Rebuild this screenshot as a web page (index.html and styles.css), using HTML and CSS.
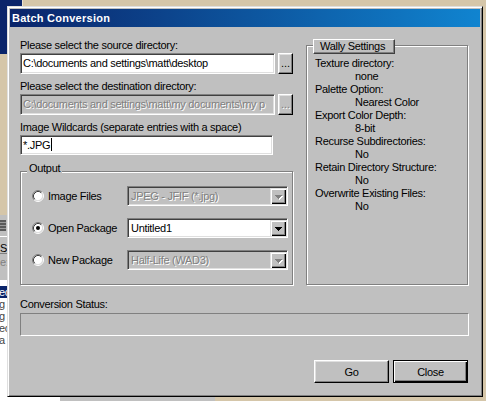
FILE: index.html
```html
<!DOCTYPE html>
<html>
<head>
<meta charset="utf-8">
<title>Batch Conversion</title>
<link rel="stylesheet" href="styles.css">
</head>
<body>
<div class="desktop">
  <div class="bg-title"></div>
  <div class="bg-explorer">
    <div class="bx-toolbar"><span class="bx-icon"></span></div>
    <div class="bx-sep"></div>
    <div class="bx-row">S</div>
    <div class="bx-row dim">e:</div>
    <div class="bx-fill"></div>
    <ul class="bx-list">
      <li class="sel">ec</li>
      <li>g</li>
      <li>g</li>
      <li>ec</li>
      <li>a</li>
    </ul>
  </div>
  <div class="bg-taskstrip"></div>

  <div class="window">
    <div class="titlebar">Batch Conversion</div>
    <div class="client">
      <div class="top">
        <div class="left">
          <div class="lbl">Please select the source directory:</div>
          <div class="pathrow">
            <div class="field">C:\documents and settings\matt\desktop</div>
            <div class="browse">...</div>
          </div>

          <div class="lbl gap">Please select the destination directory:</div>
          <div class="pathrow">
            <div class="field disabled">C:\documents and settings\matt\my documents\my p</div>
            <div class="browse disabled">...</div>
          </div>

          <div class="lbl gap">Image Wildcards (separate entries with a space)</div>
          <div class="field wild">*.JPG<span class="caret"></span></div>

          <div class="group output">
            <div class="legend">Output</div>
            <div class="opts">
              <div class="opt">
                <svg class="radio" viewBox="0 0 12 12" width="12" height="12">
                  <circle cx="6" cy="6" r="4.5" fill="#fff"/>
                  <path d="M2.11 9.89A5.5 5.5 0 0 1 9.89 2.11" fill="none" stroke="#808080"/>
                  <path d="M9.89 2.11A5.5 5.5 0 0 1 2.11 9.89" fill="none" stroke="#fff"/>
                  <path d="M2.82 9.18A4.5 4.5 0 0 1 9.18 2.82" fill="none" stroke="#404040"/>
                  <path d="M9.18 2.82A4.5 4.5 0 0 1 2.82 9.18" fill="none" stroke="#dfdfdf"/>
                </svg>
                <span class="opt-label">Image Files</span>
                <div class="combo disabled">
                  <span class="combo-text">JPEG - JFIF (*.jpg)</span>
                  <span class="combo-btn">
                    <svg viewBox="0 0 16 16" width="16" height="16">
                      <g fill="#fff"><rect x="6" y="8" width="7" height="1"/><rect x="7" y="9" width="5" height="1"/><rect x="8" y="10" width="3" height="1"/><rect x="9" y="11" width="1" height="1"/></g>
                      <g fill="#808080"><rect x="5" y="7" width="7" height="1"/><rect x="6" y="8" width="5" height="1"/><rect x="7" y="9" width="3" height="1"/><rect x="8" y="10" width="1" height="1"/></g>
                    </svg>
                  </span>
                </div>
              </div>
              <div class="opt">
                <svg class="radio" viewBox="0 0 12 12" width="12" height="12">
                  <circle cx="6" cy="6" r="4.5" fill="#fff"/>
                  <path d="M2.11 9.89A5.5 5.5 0 0 1 9.89 2.11" fill="none" stroke="#808080"/>
                  <path d="M9.89 2.11A5.5 5.5 0 0 1 2.11 9.89" fill="none" stroke="#fff"/>
                  <path d="M2.82 9.18A4.5 4.5 0 0 1 9.18 2.82" fill="none" stroke="#404040"/>
                  <path d="M9.18 2.82A4.5 4.5 0 0 1 2.82 9.18" fill="none" stroke="#dfdfdf"/>
                  <circle cx="6" cy="6" r="2" fill="#000"/>
                </svg>
                <span class="opt-label">Open Package</span>
                <div class="combo">
                  <span class="combo-text">Untitled1</span>
                  <span class="combo-btn">
                    <svg viewBox="0 0 16 16" width="16" height="16">
                      <g fill="#000"><rect x="5" y="7" width="7" height="1"/><rect x="6" y="8" width="5" height="1"/><rect x="7" y="9" width="3" height="1"/><rect x="8" y="10" width="1" height="1"/></g>
                    </svg>
                  </span>
                </div>
              </div>
              <div class="opt">
                <svg class="radio" viewBox="0 0 12 12" width="12" height="12">
                  <circle cx="6" cy="6" r="4.5" fill="#fff"/>
                  <path d="M2.11 9.89A5.5 5.5 0 0 1 9.89 2.11" fill="none" stroke="#808080"/>
                  <path d="M9.89 2.11A5.5 5.5 0 0 1 2.11 9.89" fill="none" stroke="#fff"/>
                  <path d="M2.82 9.18A4.5 4.5 0 0 1 9.18 2.82" fill="none" stroke="#404040"/>
                  <path d="M9.18 2.82A4.5 4.5 0 0 1 2.82 9.18" fill="none" stroke="#dfdfdf"/>
                </svg>
                <span class="opt-label">New Package</span>
                <div class="combo disabled">
                  <span class="combo-text">Half-Life (WAD3)</span>
                  <span class="combo-btn">
                    <svg viewBox="0 0 16 16" width="16" height="16">
                      <g fill="#fff"><rect x="6" y="8" width="7" height="1"/><rect x="7" y="9" width="5" height="1"/><rect x="8" y="10" width="3" height="1"/><rect x="9" y="11" width="1" height="1"/></g>
                      <g fill="#808080"><rect x="5" y="7" width="7" height="1"/><rect x="6" y="8" width="5" height="1"/><rect x="7" y="9" width="3" height="1"/><rect x="8" y="10" width="1" height="1"/></g>
                    </svg>
                  </span>
                </div>
              </div>
            </div>
          </div>
        </div>

        <div class="group wally">
          <div class="wally-legend">Wally Settings</div>
          <div class="kv">
            <div class="k">Texture directory:</div>
            <div class="v">none</div>
            <div class="k">Palette Option:</div>
            <div class="v">Nearest Color</div>
            <div class="k">Export Color Depth:</div>
            <div class="v">8-bit</div>
            <div class="k">Recurse Subdirectories:</div>
            <div class="v">No</div>
            <div class="k">Retain Directory Structure:</div>
            <div class="v">No</div>
            <div class="k">Overwrite Existing Files:</div>
            <div class="v">No</div>
          </div>
        </div>
      </div>

      <div class="lbl status-lbl">Conversion Status:</div>
      <div class="status"></div>

      <div class="buttons">
        <div class="btn">Go</div>
        <div class="btn default">Close</div>
      </div>
    </div>
  </div>
</div>
</body>
</html>
```

FILE: styles.css
```css
* { box-sizing: border-box; }
html, body { margin: 0; padding: 0; }
body {
  width: 486px;
  height: 401px;
  overflow: hidden;
  background: #d5c6a9;
  font-family: "Liberation Sans", Arial, sans-serif;
  font-size: 11px;
  letter-spacing: -0.3px;
  color: #000;
}
.desktop { position: relative; width: 486px; height: 401px; }

/* background windows (partly hidden) */
.bg-title {
  position: absolute; left: 0; top: 0;
  width: 23px; height: 54px;
  background: #0a246a;
  border-right: 1px solid #ece2d0;
}
.bg-explorer {
  position: absolute; left: 0; top: 215px;
  width: 60px; height: 186px;
  background: #c0c0c0;
  display: flex; flex-direction: column;
  overflow: hidden;
}
.bx-toolbar { height: 21px; }
.bx-icon {
  display: block; margin: 5px 0 0 0;
  width: 6px; height: 11px;
  background: repeating-linear-gradient(to bottom, #5a5a5a 0 2px, #9a9a9a 2px 3px);
}
.bx-sep { height: 4px; border-top: 1px solid #fff; }
.bx-row { height: 14px; line-height: 14px; padding-top: 1px; border-bottom: 1px solid #808080; font-size: 11px; }
.bx-row.dim { color: #808080; border-bottom: 0; }
.bx-fill { height: 12px; }
.bx-list {
  list-style: none; margin: 0; padding: 6px 0 0 0;
  flex: 1; background: #fff;
}
.bx-list li { height: 12px; line-height: 12px; color: #444; text-indent: -1px; }
.bx-list li.sel { background: #0a246a; color: #fff; }
.bg-taskstrip {
  position: absolute; left: 60px; top: 390px;
  width: 155px; height: 11px;
  background: #c0c0c0;
}

/* dialog window */
.window {
  position: absolute; left: 7px; top: 6px;
  width: 476px; height: 391px;
  background: #c0c0c0;
  border: 1px solid;
  border-color: #dfdfdf #000 #000 #dfdfdf;
  box-shadow: inset 1px 1px #fff, inset -1px -1px #808080;
  padding: 2px;
  display: flex; flex-direction: column;
}
.titlebar {
  height: 18px;
  background: linear-gradient(to right, #0a246a, #1084d0);
  color: #fff;
  font-weight: bold;
  font-size: 11px;
  letter-spacing: 0.25px;
  line-height: 18px;
  padding-left: 2px;
  white-space: nowrap;
}
.client {
  flex: 1;
  padding: 12px 10px 0 10px;
  display: flex; flex-direction: column;
}
.top {
  display: grid;
  grid-template-columns: 273px 162px;
  column-gap: 13px;
  align-items: stretch;
}
.left { display: flex; flex-direction: column; }
.lbl { height: 13px; line-height: 13px; white-space: nowrap; }
.lbl.gap { margin-top: 6px; }

.pathrow { display: flex; gap: 3px; margin-top: 1px; height: 21px; }
.field {
  flex: 1;
  min-width: 0;
  height: 21px;
  background: #fff;
  border: 1px solid;
  border-color: #808080 #fff #fff #808080;
  box-shadow: inset 1px 1px #404040, inset -1px -1px #dfdfdf;
  padding: 0 2px;
  line-height: 19px;
  white-space: nowrap;
  overflow: hidden;
}
.field.disabled, .combo.disabled .combo-text { background: #c0c0c0; color: #808080; text-shadow: 1px 1px 0 #fff; }
.field.wild { flex: none; width: 253px; height: 20px; line-height: 18px; margin-top: 1px; }
.caret { display: inline-block; width: 1px; height: 13px; background: #000; vertical-align: -2px; margin-left: 1px; }

.browse, .btn {
  background: #c0c0c0;
  border: 1px solid;
  border-color: #fff #000 #000 #fff;
  box-shadow: inset -1px -1px #808080, inset 1px 1px #dfdfdf;
  display: flex; align-items: center; justify-content: center;
}
.browse { width: 15px; height: 21px; flex: none; line-height: 13px; padding-bottom: 1px; letter-spacing: 0; }
.browse.disabled { color: #808080; text-shadow: 1px 1px 0 #fff; }

/* group boxes */
.group {
  border: 1px solid #808080;
  box-shadow: inset 1px 1px #fff, 1px 1px #fff;
}
.output { margin-top: 16px; height: 114px; }
.legend {
  margin: -10px 0 0 6px;
  padding: 0 2px;
  width: fit-content;
  background: #c0c0c0;
  line-height: 13px;
  height: 13px;
}
.opts { display: flex; flex-direction: column; gap: 12px; margin-top: 11px; }
.opt { display: flex; align-items: center; height: 20px; padding-left: 11px; }
.radio { flex: none; display: block; }
.opt-label { width: 79px; margin-left: 4px; white-space: nowrap; }
.combo {
  width: 161px; height: 20px;
  display: flex;
  background: #fff;
  border: 1px solid;
  border-color: #808080 #fff #fff #808080;
  box-shadow: inset 1px 1px #404040, inset -1px -1px #dfdfdf;
  padding: 1px;
}
.combo.disabled { background: #c0c0c0; }
.combo-text { flex: 1; padding-left: 2px; line-height: 16px; white-space: nowrap; overflow: hidden; }
.combo-btn {
  width: 16px; height: 16px; flex: none;
  background: #c0c0c0;
  border-top: 1px solid #dfdfdf; border-left: 1px solid #dfdfdf;
  box-shadow: inset 1px 1px #fff, inset -1px -1px #000, inset -2px -2px #808080;
}
.combo-btn svg { display: block; margin: -1px 0 0 -1px; }

.wally { margin-top: 6px; }
.wally-legend {
  margin: -7px 0 0 6px;
  width: 82px; height: 15px;
  line-height: 13px;
  padding-left: 6px;
  background: #c0c0c0;
  border: 1px solid;
  border-color: #fff #404040 #404040 #fff;
  box-shadow: inset -1px -1px #808080;
  white-space: nowrap;
}
.kv { margin-top: 3px; padding-left: 8px; }
.k, .v { height: 13px; line-height: 13px; white-space: nowrap; }
.v { padding-left: 40px; }

.status-lbl { margin-top: 13px; }
.status {
  margin-top: 2px;
  width: 449px; height: 23px;
  border: 1px solid;
  border-color: #808080 #fff #fff #808080;
}
.buttons { display: flex; justify-content: flex-end; gap: 4px; margin-top: 24px; padding-right: 2px; }
.btn { width: 75px; height: 23px; }
.btn.default {
  border-color: #000;
  box-shadow: inset 1px 1px #fff, inset -1px -1px #000, inset -2px -2px #808080;
}
```
